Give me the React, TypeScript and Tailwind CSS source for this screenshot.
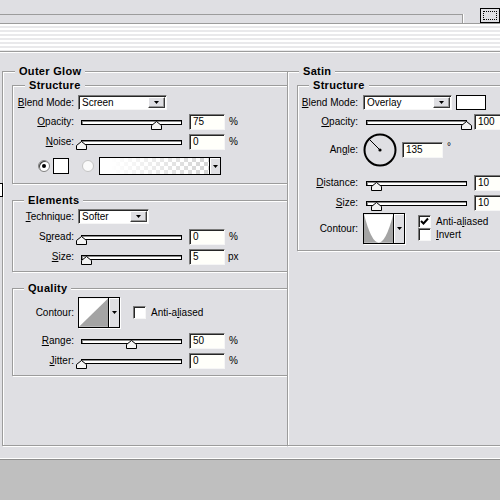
import React from 'react'

const sunken =
  'border border-t-[#7a7a7a] border-l-[#7a7a7a] border-b-[#f6f6f6] border-r-[#f6f6f6] shadow-[inset_1px_1px_0_#262626]'
const etched = 'border border-[#9c9c9c] shadow-[inset_1px_1px_0_#fff,1px_1px_0_#fff]'
const raised =
  'bg-[#dfdfe3] border border-t-white border-l-white border-b-[#3a3a3a] border-r-[#3a3a3a] shadow-[inset_-1px_-1px_0_#9a9a9a]'

function Tri() {
  return (
    <svg width="5" height="3" viewBox="0 0 5 3">
      <path d="M0 0h5L2.5 3z" fill="#000" />
    </svg>
  )
}

function Select({ text, w }: { text: string; w: string }) {
  return (
    <div className={`${w} h-[15px] bg-white flex items-center ${sunken}`}>
      <span className="flex-1 pl-[3px]">{text}</span>
      <div className={`w-[17px] h-[11px] mr-[1px] flex items-center justify-center ${raised}`}>
        <Tri />
      </div>
    </div>
  )
}

function Field({ v, w }: { v: string; w: string }) {
  return <div className={`${w} h-[16px] bg-[#fffffa] pl-[3px] flex items-center ${sunken}`}>{v}</div>
}

function Slider({ value }: { value: number }) {
  return (
    <div className="pl-[3px] pr-[7px] flex items-center">
      <div className="relative w-[101px] h-[5px] border border-black bg-white shadow-[inset_1px_1px_0_#8a8a8a]">
        <svg className="absolute top-0" style={{ left: value - 6 }} width="11" height="9" viewBox="0 0 11 9">
          <path d="M0.5 8.5V4.5L5.5 0.5L10.5 4.5V8.5Z" fill="#f4f4f4" stroke="#000" />
        </svg>
      </div>
    </div>
  )
}

function Check({ on }: { on?: boolean }) {
  return (
    <div className={`w-[13px] h-[13px] bg-white flex items-center justify-center ${sunken}`}>
      {on && (
        <svg width="9" height="9" viewBox="0 0 9 9">
          <polyline points="1,4 3.5,6.5 8,1.5" fill="none" stroke="#000" strokeWidth="2" />
        </svg>
      )}
    </div>
  )
}

function ContourBox({ kind }: { kind: 'linear' | 'cone' }) {
  return (
    <div className="w-[42px] h-[31px] flex border border-black shadow-[1px_1px_0_#fff]">
      <svg width="30" height="29" viewBox="0 0 30 29">
        {kind === 'linear' ? (
          <>
            <rect width="30" height="29" fill="#fff" />
            <path d="M0 29L30 0V29Z" fill="#a4a4a4" />
          </>
        ) : (
          <>
            <rect width="30" height="29" fill="#a4a4a4" />
            <path d="M0 0Q15 58 30 0Z" fill="#fff" />
          </>
        )}
      </svg>
      <div className="w-[11px] border-l border-black bg-[#dfdfe3] shadow-[inset_1px_1px_0_#fff] flex items-center justify-center">
        <Tri />
      </div>
    </div>
  )
}

const Title = ({ children, ml }: { children: React.ReactNode; ml: string }) => (
  <div className={`-mt-[7px] ${ml} px-[4px] w-fit h-[12px] bg-[#dfdfe3] font-bold text-[11px] leading-[12px] tracking-[0.3px]`}>
    {children}
  </div>
)

export default function App() {
  return (
    <div className="w-[500px] h-[500px] overflow-hidden bg-[#dfdfe3] flex flex-col text-black text-[10px] leading-[12px] [font-family:'Liberation_Sans',Arial,sans-serif]">
      {/* top edge of the dialog */}
      <div className="flex h-[23px] shrink-0">
        <div className="mt-[14px] w-[471px] h-[9px] border-t border-r border-[#9c9c9c] shadow-[1px_0_0_#fff]" />
        <div className="ml-[17px] mt-[8px] w-[20px] h-[15px] border border-black p-[2px] shrink-0">
          <div className="h-full border border-dotted border-black" />
        </div>
      </div>
      <div className="h-[29px] shrink-0 border-y border-[#9c9c9c] shadow-[0_1px_0_#fff] bg-[repeating-linear-gradient(to_bottom,#fff_0px,#fff_2px,#e9e9eb_2px,#e9e9eb_4px)]" />

      <div className="mt-[12px] flex h-[383px] shrink-0">
        {/* Outer Glow */}
        <div className="w-[287px] shrink-0 overflow-hidden relative">
          <div className="absolute left-0 top-[119px] w-[3px] h-[14px] bg-white border border-l-0 border-black" />
          <div className={`mt-[7px] ml-[2px] w-[330px] h-[375px] ${etched}`}>
            <Title ml="ml-[12px]">Outer Glow</Title>

            <div className={`mt-[8px] ml-[9px] w-[310px] h-[99px] ${etched}`}>
              <Title ml="ml-[12px]">Structure</Title>
              <div className="mt-[4px] h-[15px] flex items-center">
                <div className="w-[61px] text-right"><u>B</u>lend Mode:</div>
                <div className="ml-[4px]"><Select text="Screen" w="w-[89px]" /></div>
              </div>
              <div className="mt-[4px] h-[16px] flex items-center">
                <div className="w-[61px] text-right"><u>O</u>pacity:</div>
                <div className="ml-[4px]"><Slider value={75} /></div>
                <Field v="75" w="w-[36px]" />
                <span className="ml-[4px]">%</span>
              </div>
              <div className="mt-[4px] h-[16px] flex items-center">
                <div className="w-[61px] text-right"><u>N</u>oise:</div>
                <div className="ml-[4px]"><Slider value={0} /></div>
                <Field v="0" w="w-[36px]" />
                <span className="ml-[4px]">%</span>
              </div>
              <div className="mt-[7px] h-[18px] flex items-center">
                <div className="ml-[25px] w-[12px] h-[12px] rounded-full bg-white border border-[#808080] shadow-[inset_1px_1px_0_#404040] flex items-center justify-center">
                  <div className="w-[4px] h-[4px] rounded-full bg-black" />
                </div>
                <div className="ml-[3px] w-[16px] h-[16px] border border-black bg-white" />
                <div className="ml-[13px] w-[12px] h-[12px] rounded-full bg-[#fafafa] border border-[#c4c4c4]" />
                <div className="ml-[5px] w-[122px] h-[18px] border border-black flex">
                  <div className="flex-1 [background-image:linear-gradient(to_right,#fff_10%,rgba(255,255,255,0)_95%),repeating-conic-gradient(#d6d6d6_0_25%,#fff_0_50%)] [background-size:100%_100%,8px_8px]" />
                  <div className="w-[11px] border-l border-black bg-[#dfdfe3] shadow-[inset_1px_1px_0_#fff] flex items-center justify-center">
                    <Tri />
                  </div>
                </div>
              </div>
            </div>

            <div className={`mt-[16px] ml-[9px] w-[310px] h-[72px] ${etched}`}>
              <Title ml="ml-[11px]">Elements</Title>
              <div className="mt-[3px] h-[15px] flex items-center">
                <div className="w-[61px] text-right"><u>T</u>echnique:</div>
                <div className="ml-[4px]"><Select text="Softer" w="w-[71px]" /></div>
              </div>
              <div className="mt-[5px] h-[16px] flex items-center">
                <div className="w-[61px] text-right">S<u>p</u>read:</div>
                <div className="ml-[4px]"><Slider value={0} /></div>
                <Field v="0" w="w-[36px]" />
                <span className="ml-[4px]">%</span>
              </div>
              <div className="mt-[4px] h-[16px] flex items-center">
                <div className="w-[61px] text-right"><u>S</u>ize:</div>
                <div className="ml-[4px]"><Slider value={5} /></div>
                <Field v="5" w="w-[36px]" />
                <span className="ml-[3px]">px</span>
              </div>
            </div>

            <div className={`mt-[16px] ml-[9px] w-[310px] h-[88px] ${etched}`}>
              <Title ml="ml-[11px]">Quality</Title>
              <div className="mt-[3px] h-[31px] flex items-center">
                <div className="w-[61px] text-right">Contour:</div>
                <div className="ml-[4px]"><ContourBox kind="linear" /></div>
                <div className="ml-[13px]"><Check /></div>
                <span className="ml-[5px]">Anti-a<u>l</u>iased</span>
              </div>
              <div className="mt-[5px] h-[16px] flex items-center">
                <div className="w-[61px] text-right"><u>R</u>ange:</div>
                <div className="ml-[4px]"><Slider value={50} /></div>
                <Field v="50" w="w-[36px]" />
                <span className="ml-[4px]">%</span>
              </div>
              <div className="mt-[4px] h-[16px] flex items-center">
                <div className="w-[61px] text-right"><u>J</u>itter:</div>
                <div className="ml-[4px]"><Slider value={0} /></div>
                <Field v="0" w="w-[36px]" />
                <span className="ml-[4px]">%</span>
              </div>
            </div>
          </div>
        </div>

        {/* Satin */}
        <div className="flex-1 overflow-hidden">
          <div className={`mt-[7px] w-[300px] h-[375px] ${etched}`}>
            <Title ml="ml-[11px]">Satin</Title>
            <div className={`mt-[8px] ml-[9px] w-[260px] h-[166px] ${etched}`}>
              <Title ml="ml-[11px]">Structure</Title>
              <div className="mt-[4px] h-[15px] flex items-center">
                <div className="w-[60px] text-right"><u>B</u>lend Mode:</div>
                <div className="ml-[5px]"><Select text="Overlay" w="w-[89px]" /></div>
                <div className="ml-[4px] w-[30px] h-[15px] border border-black bg-white" />
              </div>
              <div className="mt-[4px] h-[16px] flex items-center">
                <div className="w-[60px] text-right"><u>O</u>pacity:</div>
                <div className="ml-[5px]"><Slider value={100} /></div>
                <Field v="100" w="w-[36px]" />
              </div>
              <div className="mt-[3px] h-[34px] flex items-center">
                <div className="w-[60px] text-right">An<u>g</u>le:</div>
                <svg className="ml-[5px]" width="34" height="34" viewBox="0 0 34 34">
                  <circle cx="17" cy="17" r="15.5" fill="none" stroke="#000" strokeWidth="2" />
                  <line x1="17" y1="17" x2="6.5" y2="6.5" stroke="#000" strokeWidth="1" />
                  <circle cx="17" cy="17" r="1.6" fill="#000" />
                </svg>
                <div className="ml-[5px]"><Field v="135" w="w-[41px]" /></div>
                <span className="ml-[4px] self-start mt-[8px]">°</span>
              </div>
              <div className="mt-[8px] h-[16px] flex items-center">
                <div className="w-[60px] text-right"><u>D</u>istance:</div>
                <div className="ml-[5px]"><Slider value={10} /></div>
                <Field v="10" w="w-[36px]" />
              </div>
              <div className="mt-[4px] h-[16px] flex items-center">
                <div className="w-[60px] text-right"><u>S</u>ize:</div>
                <div className="ml-[5px]"><Slider value={10} /></div>
                <Field v="10" w="w-[36px]" />
              </div>
              <div className="mt-[2px] h-[31px] flex items-center">
                <div className="w-[60px] text-right">Contour:</div>
                <div className="ml-[5px]"><ContourBox kind="cone" /></div>
                <div className="ml-[13px] self-start mt-[2px] flex flex-col">
                  <div className="flex items-center h-[13px]">
                    <Check on />
                    <span className="ml-[5px]">Anti-a<u>l</u>iased</span>
                  </div>
                  <div className="flex items-center h-[13px]">
                    <Check />
                    <span className="ml-[5px]"><u>I</u>nvert</span>
                  </div>
                </div>
              </div>
            </div>
          </div>
        </div>
      </div>

      <div className="mt-[12px] flex-1 border-t border-[#8e8e8e] bg-[#bfbfbf] shadow-[0_-1px_0_#fff]" />
    </div>
  )
}
